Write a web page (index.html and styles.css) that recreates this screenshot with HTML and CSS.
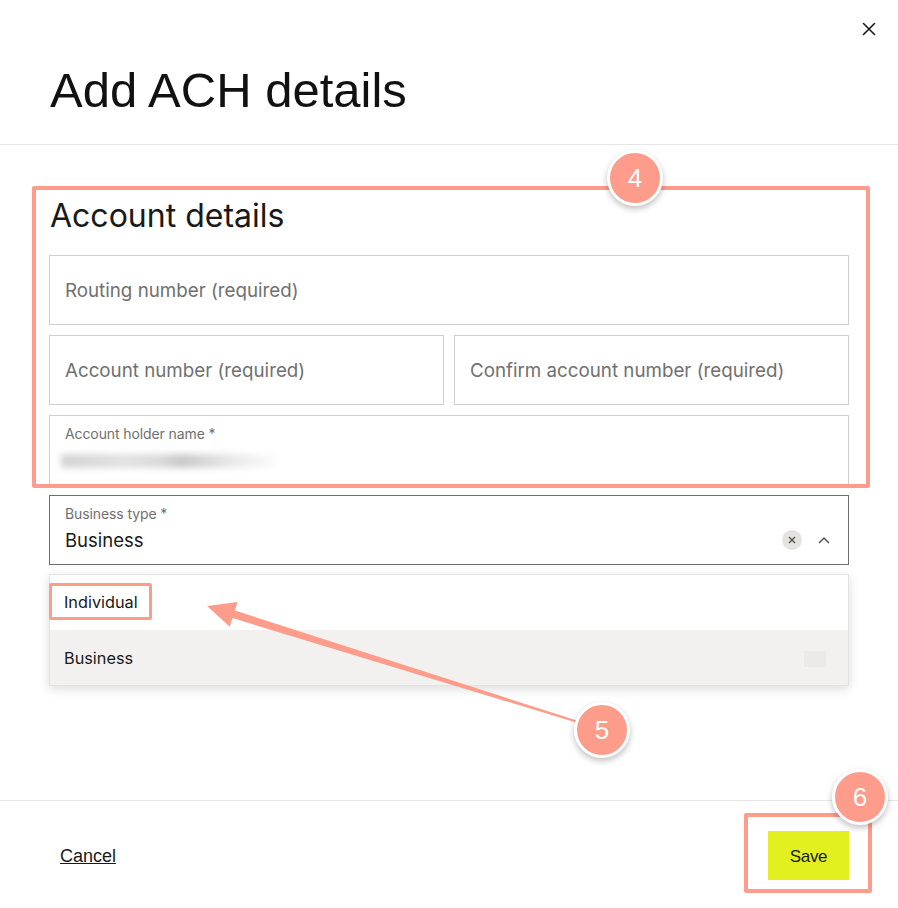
FILE: index.html
```html
<!DOCTYPE html>
<html lang="en">
<head>
<meta charset="utf-8">
<title>Add ACH details</title>
<link rel="stylesheet" href="styles.css">
</head>
<body>
<div class="modal">
  <header class="modal-header">
    <button class="close-btn" aria-label="Close">
      <svg width="14" height="14" viewBox="0 0 14 14"><path d="M1.5 1.5 L12.5 12.5 M12.5 1.5 L1.5 12.5" stroke="#191919" stroke-width="1.6" fill="none" stroke-linecap="round"/></svg>
    </button>
    <h1 class="title">Add ACH details</h1>
  </header>

  <main class="modal-body">
    <h2 class="section-title">Account details</h2>
    <div class="fields">
      <div class="field"><span class="placeholder">Routing number (required)</span></div>
      <div class="field-row">
        <div class="field"><span class="placeholder">Account number (required)</span></div>
        <div class="field"><span class="placeholder">Confirm account number (required)</span></div>
      </div>
      <div class="field field-filled">
        <span class="label">Account holder name *</span>
        <span class="blurred"></span>
      </div>
      <div class="select-wrap">
        <div class="field field-filled field-active">
          <span class="label">Business type *</span>
          <span class="value">Business</span>
          <span class="select-icons">
            <span class="clear-btn">
              <svg width="8" height="8" viewBox="0 0 8 8"><path d="M1 1 L7 7 M7 1 L1 7" stroke="#555" stroke-width="1.4" fill="none"/></svg>
            </span>
            <svg class="chevron" width="12" height="8" viewBox="0 0 12 8"><path d="M1 7 L6 2 L11 7" stroke="#555" stroke-width="1.5" fill="none"/></svg>
          </span>
        </div>
        <ul class="menu">
          <li class="menu-item">Individual</li>
          <li class="menu-item menu-item-selected">Business<span class="check-slot"></span></li>
        </ul>
      </div>
    </div>
  </main>

  <footer class="modal-footer">
    <a class="cancel" href="#">Cancel</a>
    <button class="save">Save</button>
  </footer>

  <div class="anno anno-box-4"></div>
  <div class="anno anno-box-ind"></div>
  <div class="anno anno-box-6"></div>
  <svg class="anno anno-arrow" width="898" height="908" viewBox="0 0 898 908">
    <polygon points="207,606 237.6,601.9 234.9,610.5 578.3,721 577.7,723 232.5,618.1 229.8,626.7" fill="#fd9c8a"/>
  </svg>
  <div class="anno badge badge-4">4</div>
  <div class="anno badge badge-5">5</div>
  <div class="anno badge badge-6">6</div>
</div>
</body>
</html>
```

FILE: styles.css
```css
* { box-sizing: border-box; }

html, body {
  margin: 0;
  padding: 0;
  background: #fff;
}

body {
  width: 898px;
  height: 908px;
  overflow: hidden;
  font-family: "Inter", "Liberation Sans", sans-serif;
  color: #191919;
}

.modal {
  position: relative;
  width: 898px;
  height: 908px;
  display: flex;
  flex-direction: column;
}

.modal-header {
  display: flex;
  flex-direction: column;
  padding: 0 0 26px 50px;
  border-bottom: 1px solid #e5e5e5;
}

.close-btn {
  align-self: flex-end;
  width: 24px;
  height: 24px;
  margin: 17px 17px 0 0;
  padding: 0;
  border: 0;
  background: transparent;
  display: flex;
  align-items: center;
  justify-content: center;
}

.title {
  margin: 21px 0 0 0;
  font-family: "Liberation Sans", Arial, sans-serif;
  font-weight: 400;
  font-size: 49px;
  line-height: 56px;
  color: #111;
}

.modal-body {
  flex: 1;
  padding: 0 49px;
}

.section-title {
  margin: 51px 0 0 1px;
  font-weight: 400;
  font-size: 32px;
  line-height: 40px;
  letter-spacing: 0;
  color: #191919;
}

.fields {
  margin-top: 19px;
  display: flex;
  flex-direction: column;
  gap: 10px;
}

.field-row {
  display: flex;
  gap: 10px;
}

.field-row .field { flex: 1; }

.field {
  position: relative;
  height: 70px;
  border: 1px solid #cfcfcf;
  background: #fff;
  padding: 0 15px;
  display: flex;
  flex-direction: column;
  justify-content: center;
}

.placeholder {
  font-size: 18.75px;
  color: #707070;
}

.field-filled {
  justify-content: flex-start;
  padding-top: 9px;
}

.label {
  font-size: 14px;
  line-height: 18px;
  color: #707070;
  letter-spacing: -0.1px;
}

.blurred {
  display: block;
  margin-top: 11px;
  margin-left: -4px;
  width: 220px;
  height: 14px;
  background: linear-gradient(90deg, #d4d4d4 0%, #e2e2e2 30%, #dadada 45%, #c9c9c9 55%, #e6e6e6 75%, #fff 100%);
  filter: blur(3px);
}

.field-active {
  border-color: #6e6e6e;
}

.value {
  margin-top: 5px;
  font-size: 18.5px;
  line-height: 24px;
  color: #191919;
}

.select-wrap {
  position: relative;
}

.select-icons {
  position: absolute;
  right: 18px;
  top: 34px;
  display: flex;
  align-items: center;
  gap: 16px;
}

.clear-btn {
  width: 20px;
  height: 20px;
  border-radius: 50%;
  background: #e5e3e0;
  display: flex;
  align-items: center;
  justify-content: center;
}

.chevron { display: block; }

.menu {
  position: absolute;
  left: 0;
  right: 0;
  top: 79px;
  margin: 0;
  padding: 0;
  list-style: none;
  background: #fff;
  border: 1px solid #e3e3e3;
  box-shadow: 0 3px 10px rgba(0, 0, 0, 0.14);
}

.menu-item {
  position: relative;
  height: 55px;
  padding: 0 14px;
  display: flex;
  align-items: center;
  font-size: 16.3px;
  color: #191919;
}

.menu-item:first-child {
  padding-bottom: 2px;
}

.menu-item-selected {
  background: #f2f1f0;
}

.check-slot {
  position: absolute;
  right: 22px;
  top: 21px;
  width: 22px;
  height: 16px;
  background: #eceae8;
}

.modal-footer {
  height: 108px;
  border-top: 1px solid #e5e5e5;
  display: flex;
  align-items: center;
  justify-content: space-between;
  padding: 0 49px 0 60px;
  font-family: "Liberation Sans", Arial, sans-serif;
}

.cancel {
  color: #191919;
  font-size: 18px;
  text-decoration: underline;
  margin-top: 4px;
}

.save {
  width: 81px;
  height: 49px;
  border: 0;
  padding: 3px 0 0 0;
  background: #e2f020;
  font-family: "Liberation Sans", Arial, sans-serif;
  font-size: 17px;
  letter-spacing: -0.3px;
  color: #191919;
  margin-top: 1px;
}

/* annotation overlay */
.anno {
  position: absolute;
  pointer-events: none;
}

.anno-box-4 {
  left: 32px;
  top: 186px;
  width: 838px;
  height: 302px;
  border: 4px solid #fd9c8a;
  border-radius: 2px;
}

.anno-box-ind {
  left: 49px;
  top: 583px;
  width: 103px;
  height: 37px;
  border: 3px solid #fd9c8a;
  border-radius: 2px;
}

.anno-box-6 {
  left: 744px;
  top: 813px;
  width: 128px;
  height: 80px;
  border: 4px solid #fd9c8a;
  border-radius: 2px;
}

.anno-arrow {
  left: 0;
  top: 0;
}

.badge {
  width: 56px;
  height: 56px;
  border-radius: 50%;
  background: #fd9c8a;
  border: 3px solid #fff;
  box-shadow: 0 3px 6px rgba(0, 0, 0, 0.25);
  color: #fff;
  font-family: "Liberation Sans", Arial, sans-serif;
  font-size: 26px;
  display: flex;
  align-items: center;
  justify-content: center;
}

.badge-4 { left: 607px; top: 150px; }
.badge-5 { left: 574px; top: 702px; }
.badge-6 { left: 832px; top: 769px; }
```
